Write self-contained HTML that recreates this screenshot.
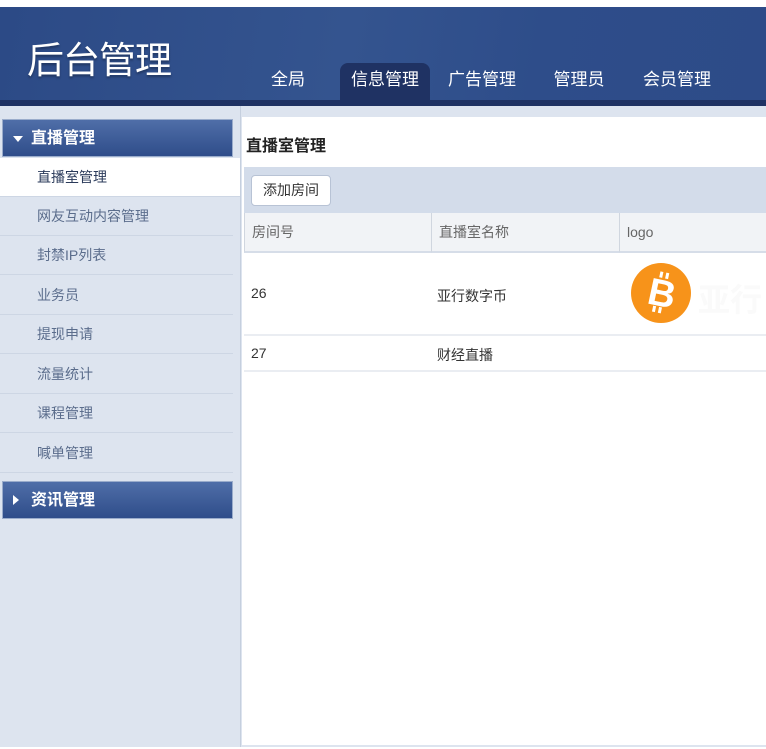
<!DOCTYPE html>
<html><head><meta charset="utf-8"><style>
*{margin:0;padding:0;box-sizing:border-box}
body{width:766px;height:749px;background:#fff;font-family:"Liberation Sans","Noto Sans CJK SC",sans-serif;position:relative;overflow:hidden}
.hdr{position:absolute;left:0;top:7px;width:766px;height:93px;background:linear-gradient(100deg,#2c4a86 0%,#34548f 45%,#2e4d8a 70%,#2d4b88 100%)}
.band{position:absolute;left:0;top:100px;width:766px;height:6px;background:#1f3263}
.logo{position:absolute;left:27px;top:30px;font-size:37px;color:#fff;letter-spacing:-1px;text-shadow:0 2px 2px rgba(0,0,0,.3)}
.nav{position:absolute;top:63px;height:37px;color:#fff;font-size:17px;line-height:34px;text-align:center}
.nav.on{background:#1f3263;border-radius:8px 8px 0 0}
.bodybg{position:absolute;left:0;top:106px;width:766px;height:641px;background:#dde4ef}
.side{position:absolute;left:0;top:106px;width:241px;height:641px;border-right:1px solid #c5cfde}
.sh{position:absolute;left:2px;width:231px;height:38px;background:linear-gradient(#4f6ea8,#2f4d8a);color:#fff;font-weight:bold;font-size:16px;line-height:38px;padding-left:28px;border:1px solid #9aaccb}
.tri{position:absolute;left:10px;top:16px;width:0;height:0}
.item{position:absolute;left:0;width:233px;height:39px;line-height:38px;padding-left:37px;font-size:14px;color:#5b6d8c;border-bottom:1px solid #cdd6e4}
.main{position:absolute;left:242px;top:117px;width:524px;height:628px;background:#fff}
.t{position:absolute;left:4px;top:15px;font-size:16px;font-weight:bold;color:#222}
.tool{position:absolute;left:2px;top:50px;width:522px;height:46px;background:#d3dcea}
.btn{position:absolute;left:7px;top:8px;width:80px;height:31px;background:#fff;border:1px solid #b8c3d5;border-radius:4px;font-size:14px;line-height:29px;text-align:center;color:#333}
.th{position:absolute;top:96px;height:40px;background:#f1f3f6;border-bottom:2px solid #d6dde8;border-left:1px solid #d0d6df;font-size:14px;color:#666;line-height:38px;padding-left:7px}
.td{position:absolute;font-size:14px;color:#333}
.rl{position:absolute;left:2px;width:522px;height:2px;background:#eaedf2}
</style></head><body>
<div class="hdr"></div><div class="band"></div>
<div class="logo">后台管理</div>
<div class="nav" style="left:258px;width:60px">全局</div>
<div class="nav on" style="left:340px;width:90px">信息管理</div>
<div class="nav" style="left:437px;width:90px">广告管理</div>
<div class="nav" style="left:540px;width:78px">管理员</div>
<div class="nav" style="left:632px;width:90px">会员管理</div>
<div class="bodybg"></div>
<div class="side">
<div class="sh" style="top:13px"><span class="tri" style="border-left:5px solid transparent;border-right:5px solid transparent;border-top:6px solid #fff"></span>直播管理</div>
<div class="item" style="top:52px;background:#fff;color:#2a3a5a;width:240px">直播室管理</div>
<div class="item" style="top:91px">网友互动内容管理</div>
<div class="item" style="top:130px">封禁IP列表</div>
<div class="item" style="top:170px">业务员</div>
<div class="item" style="top:209px">提现申请</div>
<div class="item" style="top:249px">流量统计</div>
<div class="item" style="top:288px">课程管理</div>
<div class="item" style="top:328px">喊单管理</div>
<div class="sh" style="top:375px"><span class="tri" style="top:13px;border-top:5px solid transparent;border-bottom:5px solid transparent;border-left:6px solid #fff"></span>资讯管理</div>
</div>
<div class="main">
<div class="t">直播室管理</div>
<div class="tool"><div class="btn">添加房间</div></div>
<div class="th" style="left:2px;width:188px">房间号</div>
<div class="th" style="left:189px;width:188px">直播室名称</div>
<div class="th" style="left:377px;width:147px">logo</div>
<div class="td" style="left:9px;top:168px">26</div>
<div class="td" style="left:195px;top:169px">亚行数字币</div>
<svg style="position:absolute;left:389px;top:146px" width="60" height="60" viewBox="0 0 60 60"><circle cx="30" cy="30" r="30" fill="#f7931a"/><text x="31" y="43" text-anchor="middle" font-family="Liberation Sans" font-weight="bold" font-size="38" fill="#fff" transform="rotate(12 30 30)">B</text><rect x="25" y="9" width="3" height="6" fill="#fff" transform="rotate(12 30 30)"/><rect x="31" y="9" width="3" height="6" fill="#fff" transform="rotate(12 30 30)"/><rect x="25" y="44" width="3" height="6" fill="#fff" transform="rotate(12 30 30)"/><rect x="31" y="44" width="3" height="6" fill="#fff" transform="rotate(12 30 30)"/></svg>
<div class="td" style="left:456px;top:158px;font-size:32px;font-weight:bold;color:#fafafa">亚行</div>
<div class="rl" style="top:217px"></div>
<div class="td" style="left:9px;top:228px">27</div>
<div class="td" style="left:195px;top:228px">财经直播</div>
<div class="rl" style="top:253px"></div>
</div>
</body></html>
